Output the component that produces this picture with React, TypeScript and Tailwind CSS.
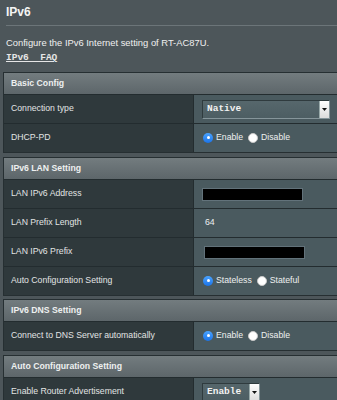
import React from "react";

type Row = { label: string; value: React.ReactNode };

function Radio({ checked, label }: { checked?: boolean; label: string }) {
  return (
    <span className="flex items-center gap-[3px]">
      {checked ? (
        <span className="w-[10px] h-[10px] rounded-full bg-gradient-to-b from-[#4aa3ff] to-[#1a73e8] flex items-center justify-center">
          <span className="w-[3px] h-[3px] rounded-full bg-white" />
        </span>
      ) : (
        <span className="w-[10px] h-[10px] rounded-full bg-white border border-[#c8c8c8]" />
      )}
      <span>{label}</span>
    </span>
  );
}

function Select({ value, width }: { value: string; width: string }) {
  return (
    <div className={`${width} h-[19px] flex items-stretch bg-gradient-to-b from-[#56676c] to-[#4d5e63] border border-[#2f3b3e] border-b-[#85959a] border-r-[#85959a] font-['Liberation_Mono',monospace] font-bold text-[9.5px] text-[#f2f2f2]`}>
      <span className="flex-1 flex items-center pl-[4px]">{value}</span>
      <span className="w-[10px] bg-gradient-to-b from-[#ffffff] to-[#dcdcdc] flex items-center justify-center border-l border-[#9aa]">
        <svg width="5" height="3" viewBox="0 0 5 3">
          <path d="M0 0h5L2.5 3z" fill="#111" />
        </svg>
      </span>
    </div>
  );
}

function BlackBox() {
  return <div className="w-[101px] h-[13px] bg-black border border-[#62727a]" />;
}

function Section({ title, rows, className }: { title: string; rows: Row[]; className?: string }) {
  return (
    <div className={`ml-[3px] border-t border-l border-b border-[#262f32] ${className ?? ""}`}>
      <div className="h-[21px] flex items-center pl-[7px] bg-gradient-to-b from-[#737c7f] to-[#5d666a] font-bold text-[8.7px] text-[#eef0f0]">
        {title}
      </div>
      {rows.map((r) => (
        <div key={r.label} className="flex h-[29px] border-t border-[#232c2f]">
          <div className="w-[190px] shrink-0 bg-[#2f393c] flex items-center pl-[7px] text-[8.7px] text-[#e2e4e4] border-r border-[#232c2f]">
            {r.label}
          </div>
          <div className="flex-1 bg-[#4a5a5f] flex items-center pl-[8px] text-[8.7px] text-[#eef0f0]">
            {r.value}
          </div>
        </div>
      ))}
    </div>
  );
}

export default function App() {
  return (
    <div className="w-[337px] h-[400px] overflow-hidden bg-[#4d565a] font-['Liberation_Sans',Arial,sans-serif]">
      <div className="pt-[5px] px-[6px]">
        <div className="h-[15px] leading-[15px] font-bold text-[12px] text-[#f4f4f4]">IPv6</div>
        <div className="mt-[5px] h-px bg-[#6c7579] -mr-[6px]" />
        <div className="mt-[11px] h-[12px] leading-[12px] text-[9.4px] text-[#f0f0f0]">
          Configure the IPv6 Internet setting of RT-AC87U.
        </div>
        <div className="mt-[3px] h-[12px] leading-[12px] font-['Liberation_Mono',monospace] font-bold text-[9.5px] text-[#e6e6e6] underline">
          IPv6&nbsp;&nbsp;FAQ
        </div>
      </div>

      <Section
        className="mt-[8px]"
        title="Basic Config"
        rows={[
          { label: "Connection type", value: <Select value="Native" width="w-[128px]" /> },
          {
            label: "DHCP-PD",
            value: (
              <div className="flex gap-[5px] pl-[1px]">
                <Radio checked label="Enable" />
                <Radio label="Disable" />
              </div>
            ),
          },
        ]}
      />

      <Section
        className="mt-[4px]"
        title="IPv6 LAN Setting"
        rows={[
          { label: "LAN IPv6 Address", value: <BlackBox /> },
          { label: "LAN Prefix Length", value: <span className="pl-[3px]">64</span> },
          { label: "LAN IPv6 Prefix", value: <div className="pl-[2px]"><BlackBox /></div> },
          {
            label: "Auto Configuration Setting",
            value: (
              <div className="flex gap-[5px] pl-[1px]">
                <Radio checked label="Stateless" />
                <Radio label="Stateful" />
              </div>
            ),
          },
        ]}
      />

      <Section
        className="mt-[3px]"
        title="IPv6 DNS Setting"
        rows={[
          {
            label: "Connect to DNS Server automatically",
            value: (
              <div className="flex gap-[5px] pl-[1px]">
                <Radio checked label="Enable" />
                <Radio label="Disable" />
              </div>
            ),
          },
        ]}
      />

      <Section
        className="mt-[4px]"
        title="Auto Configuration Setting"
        rows={[{ label: "Enable Router Advertisement", value: <Select value="Enable" width="w-[58px]" /> }]}
      />
    </div>
  );
}
